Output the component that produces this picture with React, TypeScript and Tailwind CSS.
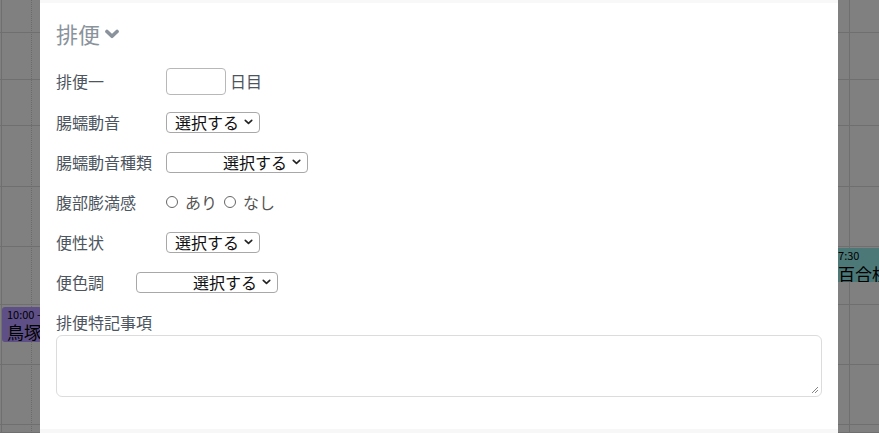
import React from 'react'

const rowHeights = [33, 47, 46, 61, 60, 58, 60, 60, 8]

const jp = { fontFamily: '"Noto Sans CJK JP", "Liberation Sans", sans-serif' }

// 背景のカレンダー（オーバーレイ越し）
function CalendarBackdrop() {
  return (
    <div className="absolute inset-0 bg-[#808080]">
      {rowHeights.map((h, i) => (
        <div
          key={i}
          className="border-b border-[#6f6f6f]"
          style={{ height: h }}
        />
      ))}
      <div className="absolute left-[1px] top-0 h-full w-px bg-[#6f6f6f]" />
      <div className="absolute left-[31px] top-0 h-full border-l border-dotted border-[#6a6a6a]" />
      <div className="absolute left-[849px] top-0 h-full w-px bg-[#6f6f6f]" />
      <div
        className="absolute left-[2px] top-[307px] h-[35px] w-[40px] overflow-hidden whitespace-nowrap rounded-[3px] bg-[#5e5086] pl-[5px] leading-none text-black"
        style={jp}
      >
        <div className="pt-[2px] text-[11px]">10:00 -</div>
        <div className="mt-[3px] text-[17px]">鳥塚</div>
      </div>
      <div
        className="absolute left-[832px] top-[248px] h-[34px] w-[47px] overflow-hidden whitespace-nowrap bg-[#4d7878] leading-none text-black"
        style={jp}
      >
        <div className="pt-[2px] text-[11px]">17:30</div>
        <div className="mt-[4px] pl-[6px] text-[17px]">百合枝</div>
      </div>
    </div>
  )
}

function Chevron({ className, width = 1.8 }: { className?: string; width?: number }) {
  return (
    <svg viewBox="0 0 10 6" className={className} fill="none">
      <path
        d="M1.4 1.2 5 4.6 8.6 1.2"
        stroke="currentColor"
        strokeWidth={width}
        strokeLinecap="round"
        strokeLinejoin="round"
      />
    </svg>
  )
}

// セレクト風ボックス
function SelectBox({ width, center }: { width: number; center?: boolean }) {
  return (
    <div
      className="flex h-[21px] shrink-0 items-center whitespace-nowrap rounded-[4px] border border-[#a8a8a8] bg-white pr-[6px] text-[16px] leading-none text-[#111]"
      style={{ width }}
    >
      <span className={center ? 'flex-1 pr-[5px] text-right' : 'flex-1 pl-[8px]'}>
        選択する
      </span>
      <Chevron className="h-[6px] w-[9px] shrink-0 text-[#222]" />
    </div>
  )
}

function Row({
  label,
  labelWidth = 110,
  children,
}: {
  label: string
  labelWidth?: number
  children: React.ReactNode
}) {
  return (
    <div className="flex h-[40px] items-center">
      <span className="shrink-0" style={{ width: labelWidth }}>
        {label}
      </span>
      {children}
    </div>
  )
}

function Radio({ label }: { label: string }) {
  return (
    <span className="flex items-center">
      <span className="mr-[7px] inline-block h-[12px] w-[12px] rounded-full border border-[#666]" />
      {label}
    </span>
  )
}

export default function App() {
  return (
    <div className="relative h-[433px] w-[879px] overflow-hidden" style={jp}>
      <CalendarBackdrop />
      <div className="absolute left-[40px] top-0 flex h-[433px] w-[798px] flex-col bg-white">
        <div className="h-[3px] bg-[#f8f8f8]" />
        <div className="flex-1 px-[16px] text-[16px] text-[#4d5560]">
          <div className="mt-[17px] flex items-center text-[22px] leading-[26px] text-[#8a939c]">
            排便
            <Chevron className="ml-[5px] mt-[1px] h-[10px] w-[14px]" width={2.6} />
          </div>
          <div className="mt-[14px] flex h-[42px] items-center">
            <span className="w-[110px] shrink-0">排便一</span>
            <div className="h-[27px] w-[60px] rounded-[4px] border border-[#b8b8b8]" />
            <span className="ml-[4px]">日目</span>
          </div>
          <Row label="腸蠕動音">
            <SelectBox width={94} />
          </Row>
          <Row label="腸蠕動音種類">
            <SelectBox width={142} center />
          </Row>
          <Row label="腹部膨満感">
            <div className="flex items-center gap-[7px] text-[#555]">
              <Radio label="あり" />
              <Radio label="なし" />
            </div>
          </Row>
          <Row label="便性状">
            <SelectBox width={94} />
          </Row>
          <Row label="便色調" labelWidth={80}>
            <SelectBox width={142} center />
          </Row>
          <div className="mt-[10px] leading-[20px]">排便特記事項</div>
          <div className="relative mt-[3px] h-[62px] w-[766px] rounded-[6px] border border-[#dcdcdc]">
            <svg
              viewBox="0 0 8 8"
              className="absolute bottom-[2px] right-[2px] h-[8px] w-[8px] text-[#777]"
            >
              <path d="M1 7 7 1M4 7 7 4" stroke="currentColor" strokeWidth="0.9" />
            </svg>
          </div>
        </div>
        <div className="h-[4px] bg-[#f7f7f7]" />
      </div>
    </div>
  )
}
